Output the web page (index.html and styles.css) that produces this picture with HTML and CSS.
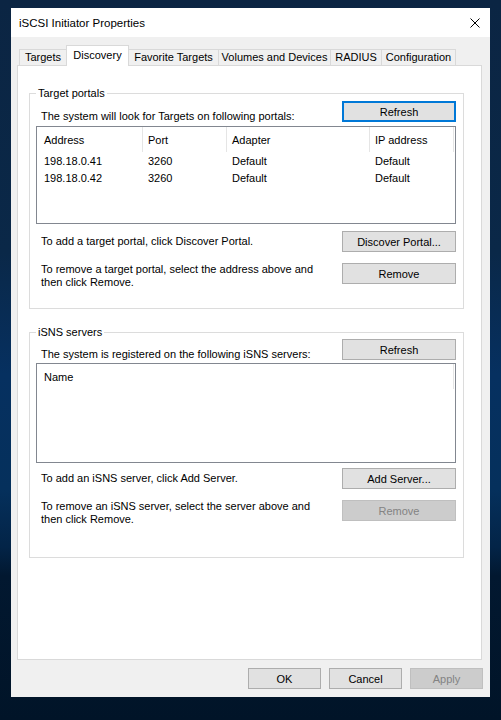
FILE: index.html
```html
<!DOCTYPE html>
<html>
<head>
<meta charset="utf-8">
<title>iSCSI Initiator Properties</title>
<link rel="stylesheet" href="styles.css">
</head>
<body>
<div class="window">
  <div class="titlebar">
    <span class="title">iSCSI Initiator Properties</span>
    <svg class="close" width="10" height="10" viewBox="0 0 10 10"><path d="M0.5 0.5 L9.5 9.5 M9.5 0.5 L0.5 9.5" stroke="#000" stroke-width="1" fill="none"/></svg>
  </div>
  <div class="tabs">
    <div class="tab t-targets">Targets</div>
    <div class="tab tab-active t-discovery">Discovery</div>
    <div class="tab t-favorite">Favorite Targets</div>
    <div class="tab t-volumes">Volumes and Devices</div>
    <div class="tab t-radius">RADIUS</div>
    <div class="tab t-config">Configuration</div>
  </div>
  <div class="panel">
    <div class="group g1">
      <div class="legend">Target portals</div>
      <div class="row row-top">
        <span class="text text-low">The system will look for Targets on following portals:</span>
        <div class="btn btn-focus">Refresh</div>
      </div>
      <div class="listbox lb1">
        <div class="lv-head cols4">
          <div class="hcell">Address</div>
          <div class="hcell">Port</div>
          <div class="hcell">Adapter</div>
          <div class="hcell">IP address</div>
        </div>
        <div class="lv-row cols4">
          <div class="cell">198.18.0.41</div>
          <div class="cell">3260</div>
          <div class="cell">Default</div>
          <div class="cell">Default</div>
        </div>
        <div class="lv-row cols4">
          <div class="cell">198.18.0.42</div>
          <div class="cell">3260</div>
          <div class="cell">Default</div>
          <div class="cell">Default</div>
        </div>
      </div>
      <div class="row row-mid r-discover">
        <span class="text">To add a target portal, click Discover Portal.</span>
        <div class="btn">Discover Portal...</div>
      </div>
      <div class="row row-two">
        <span class="text">To remove a target portal, select the address above and<br>then click Remove.</span>
        <div class="btn">Remove</div>
      </div>
    </div>

    <div class="group g2">
      <div class="legend">iSNS servers</div>
      <div class="row row-top r-top2">
        <span class="text text-low">The system is registered on the following iSNS servers:</span>
        <div class="btn">Refresh</div>
      </div>
      <div class="listbox lb2">
        <div class="lv-head cols1">
          <div class="hcell">Name</div>
        </div>
      </div>
      <div class="row row-mid r-add">
        <span class="text">To add an iSNS server, click Add Server.</span>
        <div class="btn">Add Server...</div>
      </div>
      <div class="row row-two">
        <span class="text">To remove an iSNS server, select the server above and<br>then click Remove.</span>
        <div class="btn btn-disabled">Remove</div>
      </div>
    </div>
  </div>
  <div class="footer">
    <div class="btn btn-dlg">OK</div>
    <div class="btn btn-dlg">Cancel</div>
    <div class="btn btn-dlg btn-disabled">Apply</div>
  </div>
</div>
</body>
</html>
```

FILE: styles.css
```css
html, body {
  margin: 0;
  height: 720px;
  overflow: hidden;
}
body {
  box-sizing: border-box;
  padding-top: 8px;
  background: linear-gradient(180deg, #0b2543 0%, #0a2848 35%, #063060 52%, #05305c 68%, #032447 76%, #021830 80%, #011428 100%);
  font-family: "Liberation Sans", Arial, sans-serif;
  font-size: 11px;
  color: #000;
}
.window {
  margin-left: 11px;
  width: 479px;
  height: 689px;
  background: #f0f0f0;
  display: flex;
  flex-direction: column;
}
.titlebar {
  height: 29px;
  flex: none;
  box-sizing: border-box;
  background: #fff;
  display: flex;
  align-items: center;
  justify-content: space-between;
  padding: 0 10px 0 8px;
}
.title {
  font-size: 11.5px;
}
.close {
  display: block;
}
.tabs {
  display: flex;
  align-items: flex-end;
  height: 20px;
  flex: none;
  margin: 8px 0 0 8px;
}
.tab {
  height: 16px;
  box-sizing: border-box;
  border: 1px solid #d9d9d9;
  border-bottom: 0;
  background: #f0f0f0;
  line-height: 15px;
  text-align: center;
  margin-left: -1px;
  white-space: nowrap;
}
.tab:first-child {
  margin-left: 0;
}
.tab-active {
  height: 21px;
  margin-bottom: -1px;
  background: #fff;
  line-height: 18px;
  position: relative;
  z-index: 1;
}
.t-targets { width: 48px; }
.t-discovery { width: 63px; }
.t-favorite { width: 91px; }
.t-volumes { width: 113px; }
.t-radius { width: 52px; }
.t-config { width: 75px; }

.panel {
  margin-left: 6px;
  width: 465px;
  height: 595px;
  flex: none;
  box-sizing: border-box;
  border: 1px solid #d9d9d9;
  background: #fff;
  padding: 27px 0 0 11px;
}
.group {
  width: 435px;
  box-sizing: border-box;
  border: 1px solid #dcdcdc;
  padding: 0 7px 0 6px;
}
.g1 { height: 216px; }
.g2 { height: 226px; margin-top: 23px; }
.legend {
  width: fit-content;
  margin-top: -7px;
  padding: 0 2px;
  background: #fff;
  line-height: 13px;
}
.row {
  display: flex;
  justify-content: space-between;
}
.text {
  margin-left: 5px;
  line-height: 13px;
  white-space: nowrap;
}
.row-top {
  margin-top: 1px;
  align-items: flex-end;
}
.r-top2 { margin-top: 0; }
.text-low { margin-bottom: -1px; }
.row-mid {
  align-items: center;
}
.r-discover { margin-top: 7px; }
.r-add { margin-top: 5px; }
.row-two {
  margin-top: 11px;
  align-items: flex-start;
}

.btn {
  width: 114px;
  height: 21px;
  box-sizing: border-box;
  border: 1px solid #adadad;
  background: #e1e1e1;
  display: flex;
  align-items: center;
  justify-content: center;
  flex: none;
  white-space: nowrap;
}
.btn-focus {
  border: 2px solid #0078d7;
}
.btn-disabled {
  background: #cccccc;
  border-color: #bfbfbf;
  color: #838383;
}
.btn-dlg {
  width: 73px;
}

.listbox {
  width: 420px;
  box-sizing: border-box;
  border: 1px solid #828790;
  background: #fff;
}
.lb1 { margin-top: 4px; height: 98px; }
.lb2 { margin-top: 3px; height: 100px; }
.cols4 {
  display: grid;
  grid-template-columns: 106px 84px 143px 84px;
}
.cols1 {
  display: grid;
  grid-template-columns: 417px;
}
.lv-head {
  height: 25px;
  margin-bottom: 1px;
}
.hcell {
  box-sizing: border-box;
  border-right: 1px solid #e5e5e5;
  line-height: 24px;
  padding-top: 1px;
  padding-left: 5px;
  white-space: nowrap;
}
.cell {
  line-height: 17px;
  height: 17px;
  padding-left: 5px;
  white-space: nowrap;
}
.hcell:first-child, .cell:first-child {
  padding-left: 7px;
}

.footer {
  display: flex;
  justify-content: flex-end;
  gap: 8px;
  margin-top: 8px;
  padding-right: 7px;
}
```
